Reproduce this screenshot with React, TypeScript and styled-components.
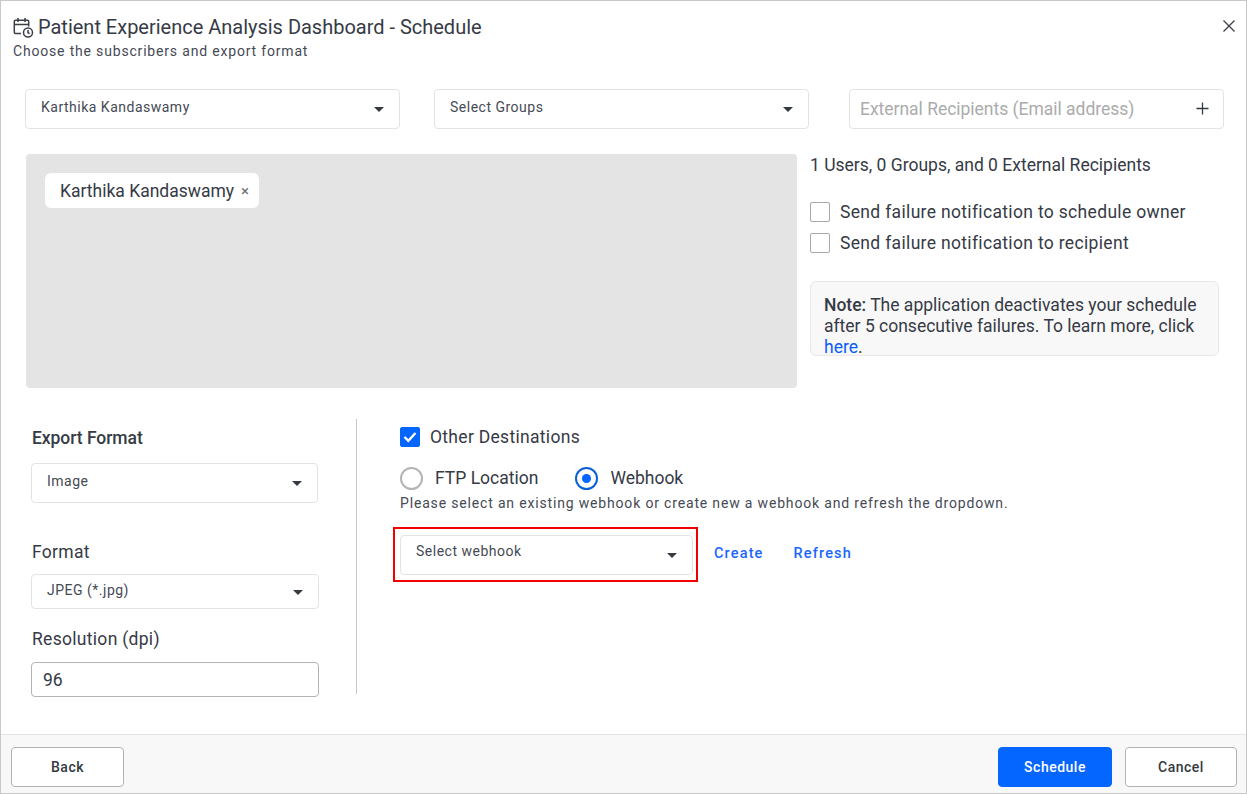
import React from "react";
import styled, { createGlobalStyle } from "styled-components";

const Global = createGlobalStyle`
  html, body { margin: 0; padding: 0; background: #fff; }
  * { box-sizing: border-box; }
  body { font-family: Roboto, "Liberation Sans", sans-serif; color: #343a40; }
`;

const Dialog = styled.div`
  width: 1247px; height: 794px; border: 1px solid #c8c8c8;
  display: flex; flex-direction: column; background: #fff; position: relative;
`;
const Header = styled.header`
  height: 88px; padding: 13px 0 0 12px; flex: none;
`;
const TitleRow = styled.div`
  display: flex; align-items: center; gap: 4px; height: 26px; color: #363a45;
`;
const Title = styled.h1`
  margin: 0; font-size: 20px; font-weight: 400; line-height: 26px; letter-spacing: -0.01px;
`;
const Subtitle = styled.div`
  font-size: 14px; line-height: 20px; letter-spacing: 0.82px; color: #454a54; margin-top: 1px;
`;
const Close = styled.button`
  position: absolute; top: 16.5px; right: 9px; width: 16px; height: 16px; padding: 0; border: 0;
  background: none; color: #3b3f48; display: flex;
`;
const TopRow = styled.div`
  display: flex; gap: 34px; padding-left: 24px; flex: none;
  & > *:last-child { margin-left: 6px; }
`;
const Field = styled.div<{ $w: number; $h?: number }>`
  width: ${p => p.$w}px; height: ${p => p.$h ?? 40}px; border: 1px solid #e3e3e3; border-radius: 4px;
  background: #fff; position: relative; display: flex; align-items: flex-start; flex: none;
  padding: 0 15px; font-size: 14px; color: #454a54; letter-spacing: 0.5px;
`;
const FieldText = styled.span<{ $top: number }>`
  margin-top: ${p => p.$top}px; line-height: 18px;
`;
const Caret = styled.i<{ $top: number }>`
  position: absolute; right: 15px; top: ${p => p.$top}px; width: 0; height: 0;
  border-left: 5px solid transparent; border-right: 5px solid transparent; border-top: 5px solid #343a40;
`;
const External = styled(Field)`
  padding: 0 14px 0 10px; align-items: center; justify-content: space-between; font-size: 17.5px;
  color: #ababab; letter-spacing: -0.02px;
  svg { margin-bottom: 1px; }
`;
const Middle = styled.div`
  display: flex; padding: 25px 0 0 25px; gap: 13px; flex: none;
`;
const Tray = styled.div`
  width: 771px; height: 234px; margin-top: 0; background: #e4e4e4; border-radius: 4px;
  padding: 19px; flex: none;
`;
const Chip = styled.div`
  display: inline-flex; align-items: center; height: 35px; padding: 0 10px 0 15px; background: #fff;
  border-radius: 6px; font-size: 17.5px; color: #363a45; gap: 7px;
`;
const ChipX = styled.span`
  font-size: 15px; color: #6c6f76; line-height: 1; margin-top: 1px;
`;
const Side = styled.div`
  width: 409px; display: flex; flex-direction: column; font-size: 17.5px; color: #363a45;
`;
const Count = styled.div`
  line-height: 22px; margin-bottom: 26px;
`;
const CheckRow = styled.label`
  display: flex; align-items: center; gap: 10px; height: 20px; margin-bottom: 11px;
  letter-spacing: 0.33px;
`;
const Box = styled.span<{ $on?: boolean }>`
  width: 20px; height: 20px; border-radius: 2px; flex: none; display: flex; align-items: center;
  justify-content: center; background: ${p => (p.$on ? "#0565ff" : "#fff")};
  border: 1px solid ${p => (p.$on ? "#0565ff" : "#a8a8a8")};
`;
const Note = styled.div`
  margin-top: 17px; height: 75px; overflow: hidden; background: #f8f8f8; border: 1px solid #e8e8e8;
  border-radius: 6px; padding: 13px 13px 0; line-height: 21px; letter-spacing: 0;
  b { font-weight: 500; }
  a { color: #0a5cff; text-decoration: none; }
`;
const Lower = styled.div`
  display: flex; padding: 31px 0 0 30px; flex: none;
`;
const LeftCol = styled.div`
  width: 326px; height: 275px; border-right: 1px solid #c8c8c8; flex: none; padding-top: 8px;
`;
const Label = styled.div<{ $strong?: boolean; $mt?: number; $mb?: number }>`
  font-size: 17.5px; line-height: 22px; color: #363a45; font-weight: ${p => (p.$strong ? 500 : 400)};
  letter-spacing: ${p => (p.$strong ? -0.05 : 0.3)}px; padding-left: 1px;
  margin-top: ${p => p.$mt ?? 0}px; margin-bottom: ${p => p.$mb ?? 13}px;
`;
const NumberBox = styled.div`
  width: 288px; height: 35px; border: 1px solid #b4b4b4; border-radius: 4px; font-size: 17.5px;
  color: #363a45; display: flex; align-items: center; padding-left: 11px;
`;
const RightCol = styled.div`
  padding: 8px 0 0 43px; flex: 1; font-size: 17.5px; color: #363a45;
`;
const OtherRow = styled.div`
  display: flex; align-items: center; gap: 10px; height: 20px; letter-spacing: 0.3px;
`;
const Radios = styled.div`
  display: flex; align-items: center; margin-top: 19px; height: 24px;
`;
const Radio = styled.span<{ $on?: boolean }>`
  width: 23px; height: 23px; border-radius: 50%; flex: none; margin-right: 12px; background: #fff;
  border: ${p => (p.$on ? "2px solid #0a5fd8" : "2px solid #b4b4b4")}; display: flex;
  align-items: center; justify-content: center;
  &::after { content: ""; display: ${p => (p.$on ? "block" : "none")}; width: 9px; height: 9px;
    border-radius: 50%; background: #0565ff; }
`;
const RadioLabel = styled.span`
  margin-right: 37px;
`;
const Hint = styled.div`
  font-size: 14px; line-height: 18px; letter-spacing: 0.83px; color: #454a54; margin-top: 4px;
`;
const WebhookRow = styled.div`
  display: flex; align-items: center; margin-top: 15px; margin-left: -7px;
`;
const Highlight = styled.div`
  border: 2px solid #f00000; padding: 6px 5px; width: 305px; height: 55px; flex: none;
`;
const TextLink = styled.a`
  font-size: 14.5px; font-weight: 500; color: #1b66ff; letter-spacing: 1.15px; margin-left: 16px;
  margin-bottom: 2px;
  & + & { margin-left: 30px; }
`;
const Footer = styled.footer`
  margin-top: auto; height: 59px; background: #f8f8f8; border-top: 1px solid #e4e4e4; flex: none;
  display: flex; align-items: flex-start; padding: 12px 9px 0 10px; gap: 13px;
`;
const Btn = styled.button<{ $primary?: boolean; $w: number }>`
  width: ${p => p.$w}px; height: 40px; border-radius: 4px; font: 500 14px Roboto, sans-serif;
  letter-spacing: 0.5px; color: ${p => (p.$primary ? "#fff" : "#343a40")};
  background: ${p => (p.$primary ? "#0565ff" : "#fff")};
  border: 1px solid ${p => (p.$primary ? "#0565ff" : "#b4b4b4")};
`;
const Spacer = styled.div`
  flex: 1;
`;

const CalendarIcon = () => (
  <svg width="21" height="21" viewBox="0 0 21 21" fill="none" stroke="#3d3f49" strokeWidth="1.5">
    <path d="M8 16.5H2.5a1.2 1.2 0 0 1-1.2-1.2V4.5a1.2 1.2 0 0 1 1.2-1.2h12a1.2 1.2 0 0 1 1.2 1.2v5" />
    <path d="M1.3 7.5h14.4M5 1v4M12 1v4" />
    <circle cx="15" cy="15.5" r="4.5" />
    <path d="M15 13v2.7l1.6.9" />
  </svg>
);

const Select = ({ w, h = 40, text, top = 8, caret = 17 }: { w: number; h?: number; text: string; top?: number; caret?: number }) => (
  <Field $w={w} $h={h}>
    <FieldText $top={top}>{text}</FieldText>
    <Caret $top={caret} />
  </Field>
);

export default function App() {
  return (
    <>
      <Global />
      <Dialog>
        <Header>
          <TitleRow>
            <CalendarIcon />
            <Title>Patient Experience Analysis Dashboard - Schedule</Title>
          </TitleRow>
          <Subtitle>Choose the subscribers and export format</Subtitle>
        </Header>
        <Close aria-label="Close">
          <svg width="16" height="16" viewBox="0 0 16 16" stroke="currentColor" strokeWidth="1.3" fill="none">
            <path d="M2.5 2.5l11 11M13.5 2.5l-11 11" />
          </svg>
        </Close>
        <TopRow>
          <Select w={375} text="Karthika Kandaswamy" />
          <Select w={375} text="Select Groups" />
          <External $w={375}>
            <span>External Recipients (Email address)</span>
            <svg width="13" height="13" viewBox="0 0 13 13" stroke="#343a40" strokeWidth="1.3">
              <path d="M6.5 0.5v12M0.5 6.5h12" />
            </svg>
          </External>
        </TopRow>
        <Middle>
          <Tray>
            <Chip>
              Karthika Kandaswamy <ChipX>×</ChipX>
            </Chip>
          </Tray>
          <Side>
            <Count>1 Users, 0 Groups, and 0 External Recipients</Count>
            <CheckRow><Box />Send failure notification to schedule owner</CheckRow>
            <CheckRow><Box />Send failure notification to recipient</CheckRow>
            <Note>
              <b>Note:</b> The application deactivates your schedule after 5 consecutive failures. To learn more, click <a>here</a>.
            </Note>
          </Side>
        </Middle>
        <Lower>
          <LeftCol>
            <Label $strong $mb={14}>Export Format</Label>
            <Select w={287} text="Image" />
            <Label $mt={38} $mb={11}>Format</Label>
            <Select w={288} h={35} text="JPEG (*.jpg)" top={6} caret={15} />
            <Label $mt={19} $mb={12}>Resolution (dpi)</Label>
            <NumberBox>96</NumberBox>
          </LeftCol>
          <RightCol>
            <OtherRow>
              <Box $on>
                <svg width="14" height="12" viewBox="0 0 14 12" fill="none" stroke="#fff" strokeWidth="2.4">
                  <path d="M1.5 6l3.8 3.8L12.5 2" />
                </svg>
              </Box>
              Other Destinations
            </OtherRow>
            <Radios>
              <Radio /><RadioLabel>FTP Location</RadioLabel>
              <Radio $on /><span>Webhook</span>
            </Radios>
            <Hint>Please select an existing webhook or create new a webhook and refresh the dropdown.</Hint>
            <WebhookRow>
              <Highlight>
                <Select w={293} text="Select webhook" top={6} caret={17} />
              </Highlight>
              <TextLink>Create</TextLink>
              <TextLink>Refresh</TextLink>
            </WebhookRow>
          </RightCol>
        </Lower>
        <Footer>
          <Btn $w={113}>Back</Btn>
          <Spacer />
          <Btn $primary $w={114}>Schedule</Btn>
          <Btn $w={112}>Cancel</Btn>
        </Footer>
      </Dialog>
    </>
  );
}
